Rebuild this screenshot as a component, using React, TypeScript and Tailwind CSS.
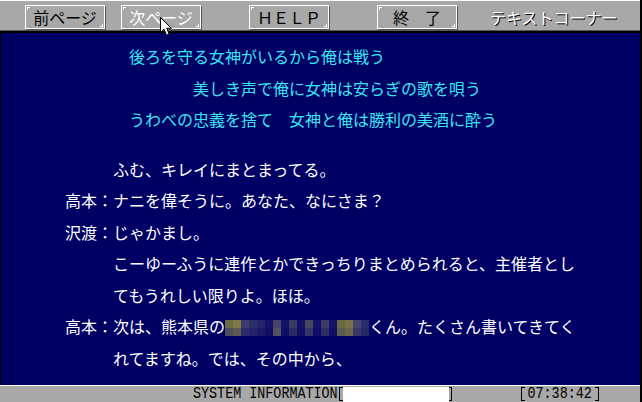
import React from "react";

const jp = "font-['Noto_Sans_CJK_JP','Noto_Sans_CJK_SC',sans-serif]";

function Btn({ label, light }: { label: string; light?: boolean }) {
  return (
    <div
      className={`relative w-[80px] h-[24px] border border-white shadow-[1px_1px_0_#585858] flex items-center justify-center text-[16px] leading-none ${
        light ? "text-white" : "text-black"
      }`}
    >
      <span className="absolute left-[1px] top-[1px] w-[3px] h-[3px] border-l border-t border-white" />
      <span className="absolute right-[1px] bottom-[1px] w-[3px] h-[3px] border-r border-b border-white" />
      <span className="whitespace-pre">{label}</span>
    </div>
  );
}

const mosaic: string[][] = [
  ["#6e6c42", "#7c7a46", "#3c3c6e", "#2e2e6a", "#26266a", "#121266", "#44446a", "#121266", "#3a3a68", "#121266", "#46465e", "#121266", "#3c3c66", "#141466", "#6c6a44", "#767446", "#44446e", "#2c2c6a"],
  ["#4e4e5a", "#5c5a50", "#2c2c6a", "#22226a", "#1a1a66", "#0e0e66", "#525260", "#0e0e66", "#2a2a66", "#0e0e66", "#34346a", "#0e0e66", "#2e2e66", "#0e0e66", "#5e5c50", "#66644a", "#383868", "#26266a"],
];

function Mosaic() {
  return (
    <span className="inline-flex flex-col align-middle w-[144px] h-[16px] -mt-[2px]">
      {mosaic.map((row, i) => (
        <span key={i} className="flex h-[8px]">
          {row.map((c, j) => (
            <span key={j} className="w-[8px] h-[8px]" style={{ backgroundColor: c }} />
          ))}
        </span>
      ))}
    </span>
  );
}

function Line({ speaker, children }: { speaker?: string; children: React.ReactNode }) {
  return (
    <div className="flex h-[31.5px] leading-[31.5px] pl-[64px] whitespace-nowrap">
      <span className="w-[32px]">{speaker ?? ""}</span>
      <span className="w-[16px]">{speaker ? "：" : ""}</span>
      <span>{children}</span>
    </div>
  );
}

export default function App() {
  return (
    <div className={`relative w-[642px] h-[402px] flex flex-col border-r-2 border-black bg-black ${jp}`}>
      {/* toolbar */}
      <div className="h-[31px] bg-[#a8a8a8] border-t border-white border-b border-b-[#585858] flex items-start pt-[4px] pl-[25px]">
        <Btn label="前ページ" />
        <div className="ml-[16px]">
          <Btn label="次ページ" light />
        </div>
        <div className="ml-[48px]">
          <Btn label="ＨＥＬＰ" />
        </div>
        <div className="ml-[48px]">
          <Btn label="終　了" />
        </div>
        <div className="ml-[33px] h-[24px] flex items-center text-[16px] leading-none text-white [text-shadow:1px_1px_0_#000]">
          テキストコーナー
        </div>
      </div>
      <div className="h-[2px] bg-black" />

      {/* main */}
      <div className="flex-1 bg-[#000064] border-l border-black pt-[8px] text-[16px]">
        <div className="text-[#36e6f2] whitespace-nowrap">
          <div className="h-[31.5px] leading-[31.5px] pl-[128px]">後ろを守る女神がいるから俺は戦う</div>
          <div className="h-[31.5px] leading-[31.5px] pl-[192px]">美しき声で俺に女神は安らぎの歌を唄う</div>
          <div className="h-[31.5px] leading-[31.5px] pl-[128px]">うわべの忠義を捨て　女神と俺は勝利の美酒に酔う</div>
        </div>
        <div className="mt-[18px] text-white">
          <Line>ふむ、キレイにまとまってる。</Line>
          <Line speaker="高本">ナニを偉そうに。あなた、なにさま？</Line>
          <Line speaker="沢渡">じゃかまし。</Line>
          <Line>こーゆーふうに連作とかできっちりまとめられると、主催者とし</Line>
          <Line>てもうれしい限りよ。ほほ。</Line>
          <Line speaker="高本">
            次は、熊本県の<Mosaic />くん。たくさん書いてきてく
          </Line>
          <Line>れてますね。では、その中から、</Line>
        </div>
      </div>

      {/* status bar */}
      <div className="h-[17px] bg-[#a8a8a8] border-t border-white flex items-center pl-[193px] font-['Liberation_Mono',monospace] text-[13.4px] leading-none text-black">
        <span className="inline-block scale-y-[1.3] tracking-[0px]">SYSTEM INFORMATION</span>
        <span className="ml-[1px] w-[4px] h-[14px] border-l border-t border-b border-black" />
        <span className="w-[106px] h-[15px] bg-white self-end" />
        <span className="w-[3px] h-[14px] border-r border-t border-b border-black" />
        <span className="ml-[69px] w-[4px] h-[14px] border-l border-t border-b border-black" />
        <span className="inline-block w-[70px] text-center scale-y-[1.3]">07:38:42</span>
        <span className="w-[4px] h-[14px] border-r border-t border-b border-black" />
      </div>

      {/* mouse cursor */}
      <svg className="absolute left-[160px] top-[17px]" width="13" height="20" viewBox="0 0 13 20">
        <path
          d="M0.5 0.5 L0.5 15.5 L4 12.2 L6.6 18.2 L9.2 17.1 L6.7 11.3 L11.4 11.3 Z"
          fill="#ffffff"
          stroke="#000000"
          strokeWidth="1"
          strokeLinejoin="miter"
        />
      </svg>
    </div>
  );
}
